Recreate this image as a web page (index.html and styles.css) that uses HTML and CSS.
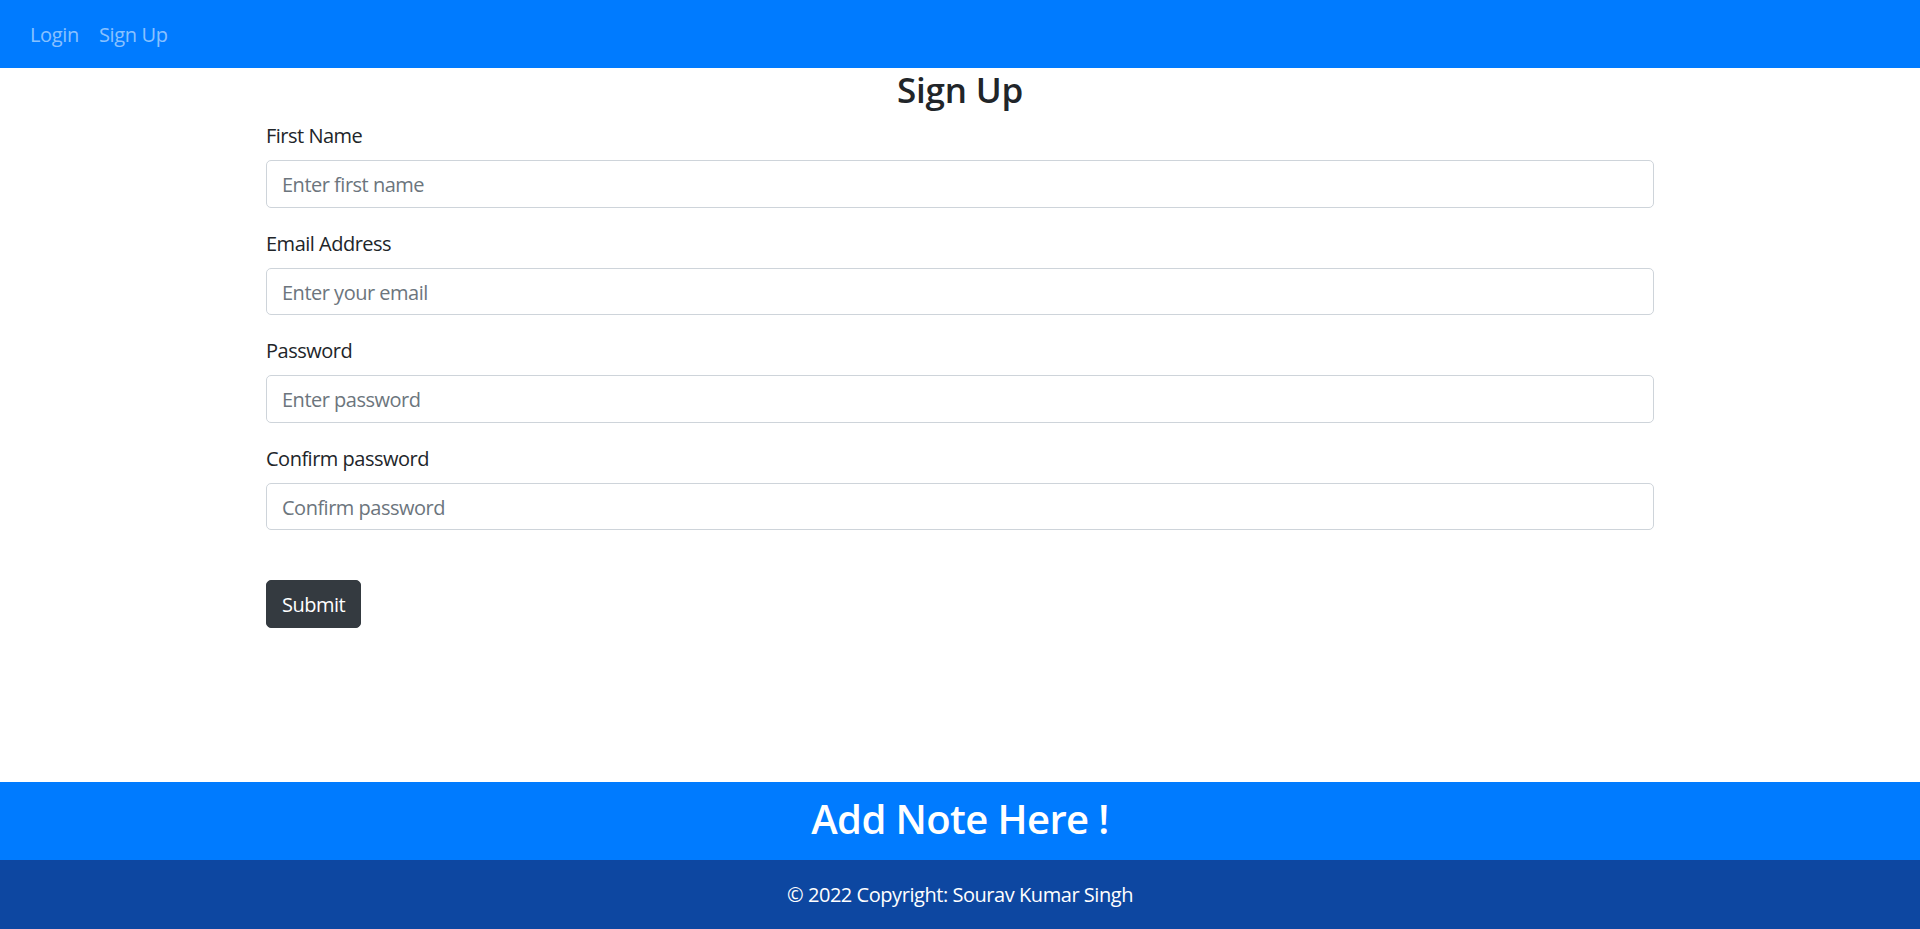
FILE: index.html
```html
<!DOCTYPE html>
<html lang="en">
<head>
<meta charset="utf-8">
<title>Sign Up</title>
<link rel="stylesheet" href="styles.css">
</head>
<body>
<div class="page">
  <nav class="navbar">
    <a class="nav-link" href="#">Login</a>
    <a class="nav-link" href="#">Sign Up</a>
  </nav>
  <main class="main">
    <div class="container">
      <h2 class="title">Sign Up</h2>
      <form class="form">
        <div class="form-group">
          <label class="label">First Name</label>
          <input class="form-control" type="text" placeholder="Enter first name">
        </div>
        <div class="form-group">
          <label class="label">Email Address</label>
          <input class="form-control" type="email" placeholder="Enter your email">
        </div>
        <div class="form-group">
          <label class="label">Password</label>
          <input class="form-control" type="password" placeholder="Enter password">
        </div>
        <div class="form-group">
          <label class="label">Confirm password</label>
          <input class="form-control" type="password" placeholder="Confirm password">
        </div>
        <button class="btn" type="button">Submit</button>
      </form>
    </div>
  </main>
  <footer class="footer">
    <div class="footer-note">
      <h2 class="footer-title">Add Note Here !</h2>
    </div>
    <div class="footer-copy">© 2022 Copyright: Sourav Kumar Singh</div>
  </footer>
</div>
</body>
</html>
```

FILE: styles.css
```css
* { box-sizing: border-box; }
html, body { margin: 0; padding: 0; }
body {
  font-family: "Open Sans", "Noto Sans", sans-serif;
  font-size: 20px;
  line-height: 1.5;
  color: #212529;
  background: #fff;
}
.page {
  display: flex;
  flex-direction: column;
  min-height: 100vh;
}
.navbar {
  display: flex;
  align-items: center;
  height: 68px;
  padding: 2px 20px 0;
  background: #007bff;
}
.nav-link {
  color: rgba(255, 255, 255, 0.55);
  text-decoration: none;
  padding: 0 10px;
  letter-spacing: -0.35px;
}
.main {
  flex: 1;
}
.container {
  width: 1388px;
  margin: 0 auto;
}
.title {
  margin: 0 0 10px;
  padding-top: 2px;
  font-size: 35px;
  line-height: 40px;
  font-weight: 600;
  text-align: center;
  letter-spacing: -0.2px;
}
.form-group {
  margin-bottom: 20px;
}
.label {
  display: block;
  padding-top: 1px;
  margin-bottom: 9px;
  letter-spacing: -0.5px;
}
.form-control {
  display: block;
  width: 100%;
  height: 47.5px;
  padding: 8.5px 15px 6.5px;
  font-family: inherit;
  font-size: 20px;
  line-height: 1.5;
  color: #495057;
  background: #fff;
  border: 1px solid #ced4da;
  border-radius: 5px;
  letter-spacing: -0.5px;
}
.form-control::placeholder {
  color: #6c757d;
  opacity: 1;
}
.btn {
  display: inline-block;
  margin-top: 30px;
  height: 47.5px;
  padding: 8.5px 15px 6.5px;
  font-family: inherit;
  font-size: 20px;
  line-height: 1.5;
  color: #fff;
  background: #343a40;
  border: 1px solid #343a40;
  border-radius: 5px;
  letter-spacing: -0.5px;
}
.footer-note {
  background: #007bff;
  padding: 13px 0 17px;
  text-align: center;
}
.footer-title {
  margin: 0;
  font-size: 40px;
  line-height: 48px;
  font-weight: 600;
  color: #fff;
  letter-spacing: -0.6px;
}
.footer-copy {
  background: #0d47a1;
  color: #fff;
  text-align: center;
  padding: 19.5px 0;
  letter-spacing: -0.45px;
}
```
